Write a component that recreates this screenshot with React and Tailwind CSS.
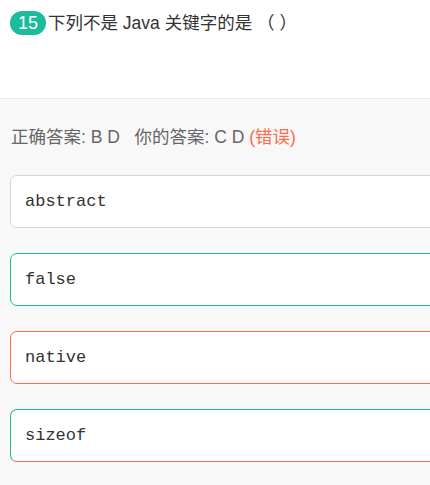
const OPCIONES = [
  { texto: 'abstract', borde: 'border-[#d6d6d6]' },
  { texto: 'false', borde: 'border-[#1abc9c]' },
  { texto: 'native', borde: 'border-[#ff6a4d]' },
  { texto: 'sizeof', borde: 'border-[#1abc9c] border-b-[#ff6a4d]' },
];

export default function App() {
  return (
    <div className="w-[430px] h-[485px] overflow-hidden bg-[#f8f8f8] font-['Liberation_Sans','Noto_Sans_CJK_SC',sans-serif]">
      <header className="h-[99px] bg-white border-b border-[#e8e8e8] pt-[11px] pl-[10px]">
        <div className="flex items-center">
          <span className="h-[24px] w-[36px] rounded-full bg-[#1abc9c] text-white text-[18px] leading-[24px] text-center">15</span>
          <p className="ml-[2px] text-[17.5px] leading-[24px] text-[#333]">下列不是 Java 关键字的是 （ ）</p>
        </div>
      </header>

      <main className="pl-[10px]">
        <p className="pt-[26px] pl-[1px] text-[17.5px] leading-[24px] text-[#666]">
          正确答案: B D&nbsp;&nbsp;&nbsp;你的答案: C D <span className="text-[#ff6a4d]">(错误)</span>
        </p>
        <div className="mt-[26px] flex flex-col gap-[25px]">
          {OPCIONES.map((o) => (
            <div
              key={o.texto}
              className={`w-[440px] h-[53px] bg-white border rounded-[7px] flex items-center pl-[14px] ${o.borde}`}
            >
              <span className="font-['Liberation_Mono',monospace] text-[17px] text-[#333]">{o.texto}</span>
            </div>
          ))}
        </div>
      </main>
    </div>
  );
}
